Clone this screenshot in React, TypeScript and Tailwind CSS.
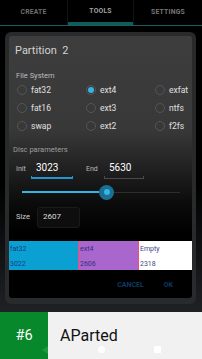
import React from "react";

const radios = [
  ["fat32", "ext4", "exfat"],
  ["fat16", "ext3", "ntfs"],
  ["swap", "ext2", "f2fs"],
];

function Radio({ label, checked }: { label: string; checked?: boolean }) {
  return (
    <div className="flex items-center gap-[4px]">
      <div className="w-[10px] h-[10px] rounded-full border border-[#555] flex items-center justify-center">
        {checked && <div className="w-[6px] h-[6px] rounded-full bg-[#33b5e5]" />}
      </div>
      <span className="text-[8.5px] text-[#e0e0e0] leading-none">{label}</span>
    </div>
  );
}

function Field({ value, focused, width }: { value: string; focused?: boolean; width: string }) {
  return (
    <div className={`flex flex-col h-[19px] ${width}`}>
      <div className="flex-1 flex items-center pl-[5px] text-[10px] text-white leading-none">{value}</div>
      <div
        className={
          focused
            ? "h-[3px] border-x border-b-2 border-[#2196d3]"
            : "h-[3px] border-x border-b border-[#4a4a4a]"
        }
      />
    </div>
  );
}

export default function App() {
  return (
    <div className="w-[202px] h-[359px] bg-black overflow-hidden flex flex-col font-['Roboto',sans-serif]">
      {/* Tabs */}
      <div className="flex h-[26px] border-b border-[#1d5a6a] shrink-0">
        <div className="w-[67px] flex items-center justify-center text-[6.8px] font-bold text-[#6e6e6e] tracking-[0.2px]">
          CREATE
        </div>
        <div className="w-[67px] flex flex-col border-x border-[#121212]">
          <div className="flex-1 flex items-center justify-center text-[6.8px] font-bold text-[#a0a0a0] tracking-[0.2px]">
            TOOLS
          </div>
          <div className="h-[3px] bg-[#0c5e56]" />
        </div>
        <div className="flex-1 flex items-center justify-center text-[6.8px] font-bold text-[#777] tracking-[0.2px]">
          SETTINGS
        </div>
      </div>

      {/* Dialog area */}
      <div className="flex-1 pt-[6px] pl-[5px] bg-[linear-gradient(to_bottom,#000_0%,#000_55%,#1f2124_100%)]">
        <div className="w-[191px] h-[272px] rounded-[6px] bg-[#292a2b] p-[4px] pb-[6px]">
          <div className="h-full rounded-[3px] flex flex-col bg-[linear-gradient(to_bottom,#3d3d3d_0%,#383838_36%,#0b0b0b_64%,#000_75%)]">
            <div className="h-[30px] flex items-center pl-[6px] text-[11px] text-[#d2d2d2]">
              Partition{"\u00a0\u00a0"}2
            </div>
            <div className="h-[15px] flex items-end pl-[7px] text-[7.5px] leading-[10px] text-[#bdbdbd]">
              File System
            </div>
            <div className="grid grid-cols-[69px_69px_1fr] auto-rows-[18px] pl-[8px] items-center">
              {radios.flat().map((r) => (
                <Radio key={r} label={r} checked={r === "ext4"} />
              ))}
            </div>
            <div className="h-[20px] flex items-end pl-[4px] text-[7.5px] leading-[10px] text-[#9e9e9e]">
              Disc parameters
            </div>
            <div className="h-[27px] flex items-end pb-[3px] pl-[7px]">
              <div className="flex items-center h-[19px]">
                <span className="w-[15px] text-[7px] text-[#bbb]">Init</span>
                <Field value="3023" focused width="w-[42px]" />
                <span className="w-[18px] ml-[13px] text-[7px] text-[#bbb]">End</span>
                <Field value="5630" width="w-[40px]" />
              </div>
            </div>
            {/* Slider */}
            <div className="h-[20px] flex items-center pl-[13px]">
              <div className="w-[158px] flex items-center">
                <div className="w-[77px] h-[2px] bg-[#33b5e5]" />
                <div className="w-[15px] h-[15px] rounded-full bg-[#1c6f93] flex items-center justify-center">
                  <div className="w-[6px] h-[6px] rounded-full bg-[#33b5e5]" />
                </div>
                <div className="flex-1 h-px bg-[#2e2e2e]" />
              </div>
            </div>
            <div className="h-[30px] flex items-center pl-[7px]">
              <span className="w-[21px] text-[7.5px] text-[#cfcfcf]">Size</span>
              <div className="w-[43px] h-[21px] rounded-[3px] bg-[#0e0e0e] border border-[#1a1a1a] flex items-center pl-[5px] text-[8px] text-[#ddd]">
                2607
              </div>
            </div>
            <div className="h-[9px]" />
            {/* Partition map */}
            <div className="h-[29px] flex text-[7px] leading-[7px]">
              <div className="w-[69px] bg-[#0aa0d2] flex flex-col justify-between pt-[5px] pb-[2px] pl-[1px] text-[#153a86]">
                <span>fat32</span>
                <span>3022</span>
              </div>
              <div className="w-[60px] bg-[#a966cc] border-l border-[#f0506e] flex flex-col justify-between pt-[5px] pb-[2px] pl-[1px] text-[#33307f]">
                <span>ext4</span>
                <span>2606</span>
              </div>
              <div className="flex-1 bg-white border-l border-[#f0506e] flex flex-col justify-between pt-[5px] pb-[2px] pl-[1px] text-[#46468e]">
                <span>Empty</span>
                <span>2318</span>
              </div>
            </div>
            <div className="flex-1 flex items-center justify-end pt-[3px] pr-[19px] gap-[20px] text-[7px] font-bold text-[#0d3b63]">
              <span>CANCEL</span>
              <span>OK</span>
            </div>
          </div>
        </div>
      </div>

      {/* Banner */}
      <div className="h-[47px] flex shrink-0 relative">
        <div className="w-[48px] bg-[#07892b] flex items-center justify-center text-white text-[14.5px]">#6</div>
        <div className="flex-1 bg-[#f1f1f1] flex items-center pl-[12px] text-[16px] text-[#111]">AParted</div>
        <div className="absolute left-[98px] top-[34px] w-[7px] h-[7px] rounded-full bg-white" />
        <div className="absolute left-[154px] top-[34px] w-[7px] h-[7px] bg-white" />
        <div className="absolute left-[42px] top-[34px] w-0 h-0 border-y-[4px] border-y-transparent border-r-[6px] border-r-[#1c9a40]" />
      </div>
    </div>
  );
}
